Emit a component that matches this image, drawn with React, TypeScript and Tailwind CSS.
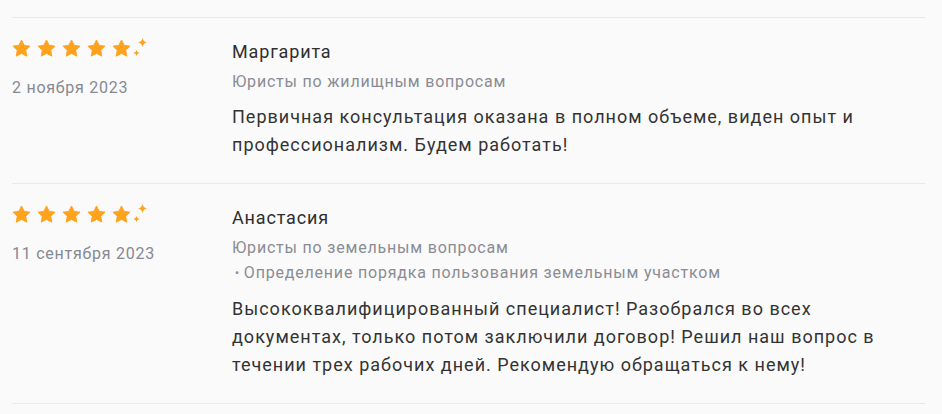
import React from 'react';

interface Review {
  name: string;
  date: string;
  category: string;
  topic?: string;
  text: string;
}

const reviews: Review[] = [
  {
    name: 'Маргарита',
    date: '2 ноября 2023',
    category: 'Юристы по жилищным вопросам',
    text: 'Первичная консультация оказана в полном объеме, виден опыт и профессионализм. Будем работать!',
  },
  {
    name: 'Анастасия',
    date: '11 сентября 2023',
    category: 'Юристы по земельным вопросам',
    topic: 'Определение порядка пользования земельным участком',
    text: 'Высококвалифицированный специалист! Разобрался во всех документах, только потом заключили договор! Решил наш вопрос в течении трех рабочих дней. Рекомендую обращаться к нему!',
  },
];

const StarIcon = () => (
  <svg width="21" height="21" viewBox="0 0 24 24" className="text-[#ffa21d]">
    <path
      fill="currentColor"
      stroke="currentColor"
      strokeWidth="1"
      strokeLinejoin="round"
      d="M12 2.2l3.02 6.12 6.76.98-4.89 4.77 1.15 6.73L12 17.62l-6.04 3.18 1.15-6.73-4.89-4.77 6.76-.98L12 2.2z"
    />
  </svg>
);

const Sparkles = () => (
  <svg width="16" height="22" viewBox="0 0 16 22" className="text-[#ffa21d]">
    <path fill="currentColor" d="M10.5 1 Q11.2 4.8 15 5.5 Q11.2 6.2 10.5 10 Q9.8 6.2 6 5.5 Q9.8 4.8 10.5 1Z" />
    <path fill="currentColor" d="M4.5 13 Q5 15.5 7.5 16 Q5 16.5 4.5 19 Q4 16.5 1.5 16 Q4 15.5 4.5 13Z" />
  </svg>
);

const Rating = () => (
  <div className="flex items-center h-6">
    <div className="flex items-center gap-[4px]">
      {[0, 1, 2, 3, 4].map((i) => (
        <StarIcon key={i} />
      ))}
    </div>
    <Sparkles />
  </div>
);

const ReviewItem: React.FC<{ review: Review }> = ({ review }) => (
  <div className="flex border-b border-[#e6e8f2] pt-5 pb-6">
    <div className="w-[220px] shrink-0">
      <div className="-mt-[2px] -ml-[1px]">
        <Rating />
      </div>
      <div className="mt-4 text-base leading-6 tracking-[0.75px] text-[#868992]">{review.date}</div>
    </div>
    <div className="w-[662px]">
      <div className="text-lg leading-7 tracking-[0.85px] text-[#2e2e2e]">{review.name}</div>
      <div className="mt-1 text-base leading-6 tracking-[0.8px] text-[#8a8c94]">{review.category}</div>
      {review.topic && (
        <div className="text-base leading-[26px] tracking-[0.8px] text-[#8a8c94] flex items-center">
          <span className="ml-[3px] mr-[4px] text-[12px]">•</span>
          {review.topic}
        </div>
      )}
      <p className="mt-[9px] text-lg leading-7 tracking-[1px] text-[#333333]">{review.text}</p>
    </div>
  </div>
);

export default function App() {
  return (
    <div
      className="min-h-[414px] bg-[#fafafa] pl-3 pr-[17px] pt-[17px]"
      style={{ fontFamily: 'Roboto, "Noto Sans", sans-serif' }}
    >
      <div className="border-t border-[#e6e8f2]">
        {reviews.map((r, i) => (
          <ReviewItem key={i} review={r} />
        ))}
      </div>
    </div>
  );
}
